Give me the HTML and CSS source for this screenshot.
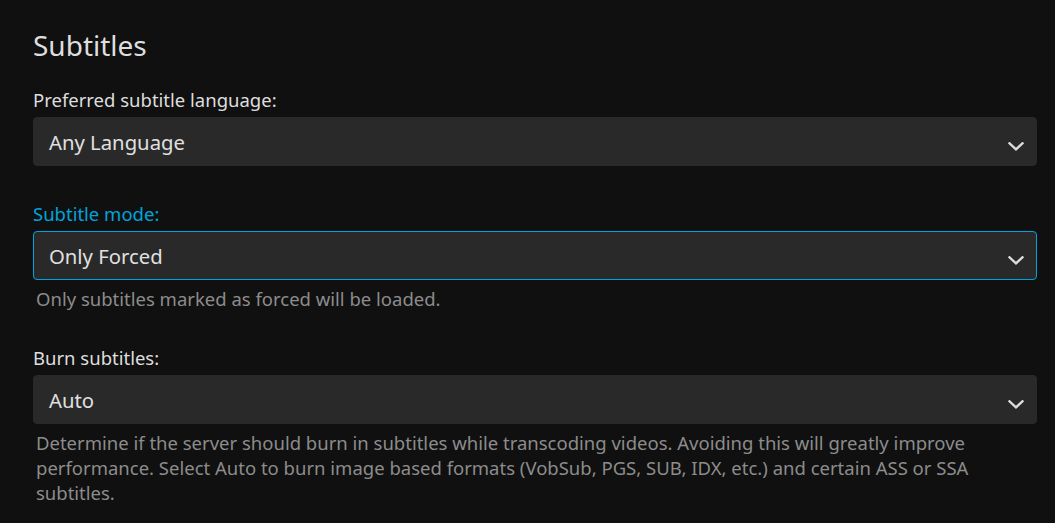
FILE: index.html
```html
<!DOCTYPE html>
<html lang="en">
<head>
<meta charset="utf-8">
<title>Subtitles</title>
<link rel="stylesheet" href="styles.css">
</head>
<body>
<div class="page">
  <h2 class="section-title">Subtitles</h2>

  <div class="select-container first">
    <label class="select-label">Preferred subtitle language:</label>
    <div class="select">
      <span class="select-value">Any Language</span>
      <svg class="chevron" width="16" height="9" viewBox="0 0 16 9"><path d="M1.5 1.3 L8 7.3 L14.5 1.3" fill="none" stroke="#dcdcdc" stroke-width="2.4" stroke-linecap="square"/></svg>
    </div>
  </div>

  <div class="select-container">
    <label class="select-label focused">Subtitle mode:</label>
    <div class="select focused">
      <span class="select-value">Only Forced</span>
      <svg class="chevron" width="16" height="9" viewBox="0 0 16 9"><path d="M1.5 1.3 L8 7.3 L14.5 1.3" fill="none" stroke="#dcdcdc" stroke-width="2.4" stroke-linecap="square"/></svg>
    </div>
    <div class="field-description">Only subtitles marked as forced will be loaded.</div>
  </div>

  <div class="select-container">
    <label class="select-label">Burn subtitles:</label>
    <div class="select">
      <span class="select-value">Auto</span>
      <svg class="chevron" width="16" height="9" viewBox="0 0 16 9"><path d="M1.5 1.3 L8 7.3 L14.5 1.3" fill="none" stroke="#dcdcdc" stroke-width="2.4" stroke-linecap="square"/></svg>
    </div>
    <div class="field-description">Determine if the server should burn in subtitles while transcoding videos. Avoiding this will greatly improve performance. Select Auto to burn image based formats (VobSub, PGS, SUB, IDX, etc.) and certain ASS or SSA subtitles.</div>
  </div>
</div>
</body>
</html>
```

FILE: styles.css
```css
html, body {
  margin: 0;
  padding: 0;
  background: #101010;
}
body {
  font-family: "Noto Sans", "Open Sans", sans-serif;
  color: #dedede;
  overflow: hidden;
}
.page {
  padding: 27px 18px 0 33px;
}
.section-title {
  margin: 0 0 25px 0;
  font-size: 28px;
  line-height: 36px;
  font-weight: 400;
  color: #dedede;
}
.select-container {
  margin-bottom: 35px;
}
.select-container.first {
  margin-bottom: 36px;
}
.select-label {
  display: block;
  font-size: 18.5px;
  line-height: 24px;
  margin-bottom: 5px;
  color: #dedede;
}
.select-label.focused {
  color: #00a4dc;
}
.select {
  display: flex;
  align-items: flex-start;
  box-sizing: border-box;
  height: 49px;
  padding: 11px 12px 9px 15px;
  border: 1px solid #292929;
  border-radius: 4px;
  background: #292929;
  font-size: 20.3px;
  line-height: 27px;
  color: #e0e0e0;
}
.select.focused {
  border-color: #00a4dc;
}
.select-value {
  flex: 1;
}
.chevron {
  margin-top: 13px;
  flex: none;
}
.field-description {
  margin-top: 6px;
  padding-left: 3px;
  font-size: 18.5px;
  line-height: 25px;
  color: #8c8c8c;
}
```
